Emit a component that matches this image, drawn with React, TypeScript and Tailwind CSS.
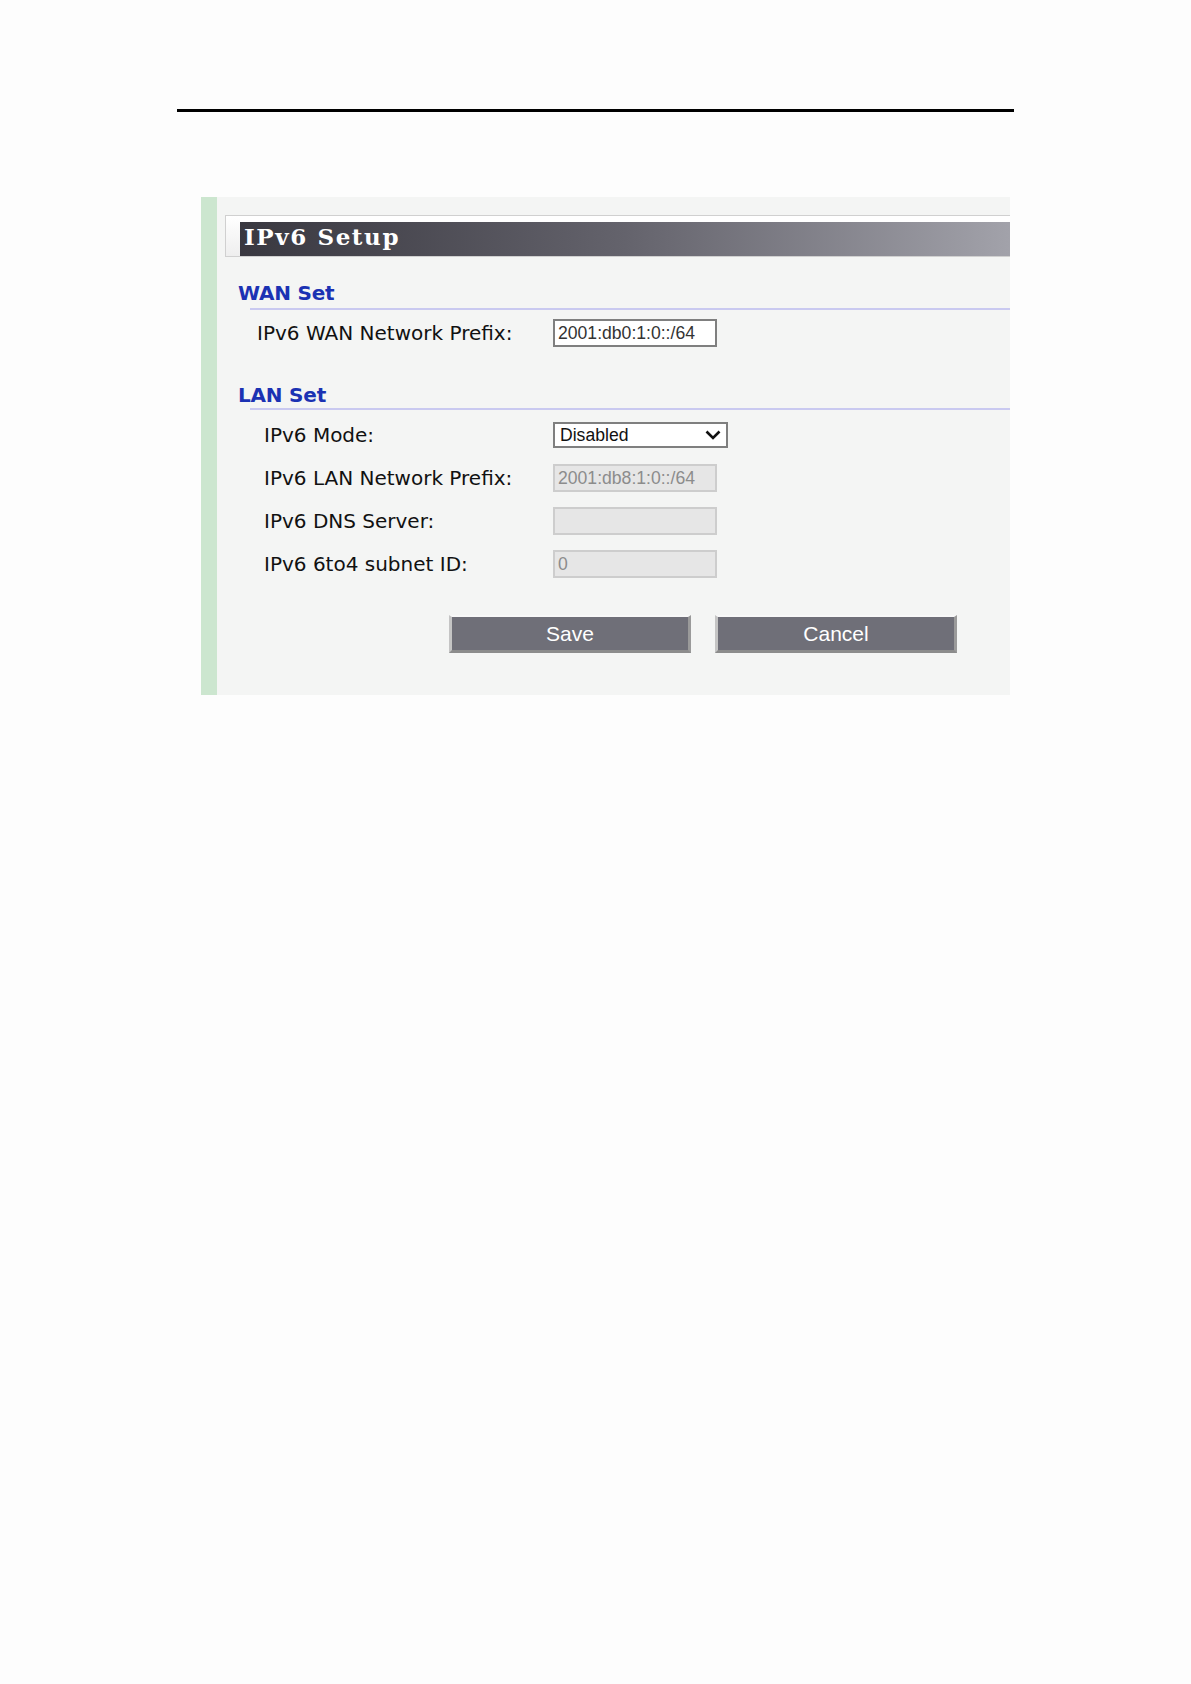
import React from "react";

const labelFont = { fontFamily: '"DejaVu Sans", sans-serif' };

function Heading({ text, mt }: { text: string; mt: string }) {
  return (
    <div className={mt}>
      <div
        className="pl-[21px] h-[24px] leading-[24px] text-[20px] font-bold text-[#1b32b3] tracking-[-0.2px]"
        style={labelFont}
      >
        {text}
      </div>
    </div>
  );
}

function Line({ mt }: { mt: string }) {
  return <div className={`${mt} ml-[33px] h-[2px] bg-[#c9c9f0]`} />;
}

export default function App() {
  return (
    <div className="w-full min-h-[1684px] bg-[#fdfdfd]">
      <div className="pt-[109px]">
        <div className="ml-[177px] w-[837px] h-[3px] bg-black" />
      </div>

      <div className="ml-[201px] mt-[85px] w-[809px] h-[498px] flex">
        <div className="w-[16px] bg-[#cce6cf]" />
        <div className="flex-1 bg-[#f4f5f4] pt-[18px]">
          {/* Title bar */}
          <div className="ml-[8px] h-[42px] flex border-y border-l border-[#d0d0d0] bg-white">
            <div className="w-[14px] bg-gradient-to-b from-white to-[#eeeeee]" />
            <div className="flex-1 mt-[6px] h-[34px] bg-gradient-to-r from-[#393840] via-[#64636c] to-[#a2a2aa] flex items-center pl-[4px] pb-[5px]">
              <span
                className="text-white text-[23px] leading-[26px] font-bold tracking-[1.6px]"
                style={{ fontFamily: '"DejaVu Serif", serif' }}
              >
                IPv6 Setup
              </span>
            </div>
          </div>

          <Heading text="WAN Set" mt="mt-[24px]" />
          <Line mt="mt-[3px]" />
          <div className="mt-[9px] pl-[40px] flex items-center h-[28px]">
            <div className="w-[296px] text-[20px] text-[#111]" style={labelFont}>
              IPv6 WAN Network Prefix:
            </div>
            <div
              className="w-[164px] h-[28px] bg-white border-2 border-[#7f7f7f] flex items-center pl-[3px] text-[17.6px] text-[#333]"
              style={{ fontFamily: '"Liberation Sans", Arial, sans-serif' }}
            >
              2001:db0:1:0::/64
            </div>
          </div>

          <Heading text="LAN Set" mt="mt-[36px]" />
          <Line mt="mt-[1px]" />

          <div className="mt-[11px] pl-[47px] flex items-center h-[28px]">
            <div className="w-[289px] text-[20px] text-[#111]" style={labelFont}>
              IPv6 Mode:
            </div>
            <div
              className="w-[175px] h-[26px] bg-white border-2 border-[#7f7f7f] flex items-center justify-between pl-[5px] pr-[5px] text-[17.6px] text-[#111]"
              style={{ fontFamily: '"Liberation Sans", Arial, sans-serif' }}
            >
              <span>Disabled</span>
              <svg width="16" height="10" viewBox="0 0 16 10">
                <polyline points="1.5,1.5 8,8 14.5,1.5" fill="none" stroke="#111" strokeWidth="2.6" />
              </svg>
            </div>
          </div>

          {[
            { label: "IPv6 LAN Network Prefix:", value: "2001:db8:1:0::/64" },
            { label: "IPv6 DNS Server:", value: "" },
            { label: "IPv6 6to4 subnet ID:", value: "0" },
          ].map((r) => (
            <div key={r.label} className="mt-[15px] pl-[47px] flex items-center h-[28px]">
              <div className="w-[289px] text-[20px] text-[#111]" style={labelFont}>
                {r.label}
              </div>
              <div
                className="w-[164px] h-[28px] bg-[#e6e6e6] border-2 border-[#cdcdcd] flex items-center pl-[3px] text-[17.6px] text-[#8c8c8c]"
                style={{ fontFamily: '"Liberation Sans", Arial, sans-serif' }}
              >
                {r.value}
              </div>
            </div>
          ))}

          <div className="mt-[37px] pl-[232px] flex gap-[24px]">
            {["Save", "Cancel"].map((b) => (
              <div
                key={b}
                className="w-[242px] h-[38px] flex items-center justify-center bg-[#6f6f78] border-l-[3px] border-l-[#c4c4c4] border-t-[2px] border-t-[#f8f8f8] border-r-[3px] border-r-[#9a9a9a] border-b-[3px] border-b-[#8c8c8c] text-white text-[21px]"
                style={{ fontFamily: '"Liberation Sans", Arial, sans-serif' }}
              >
                {b}
              </div>
            ))}
          </div>
        </div>
      </div>
    </div>
  );
}
